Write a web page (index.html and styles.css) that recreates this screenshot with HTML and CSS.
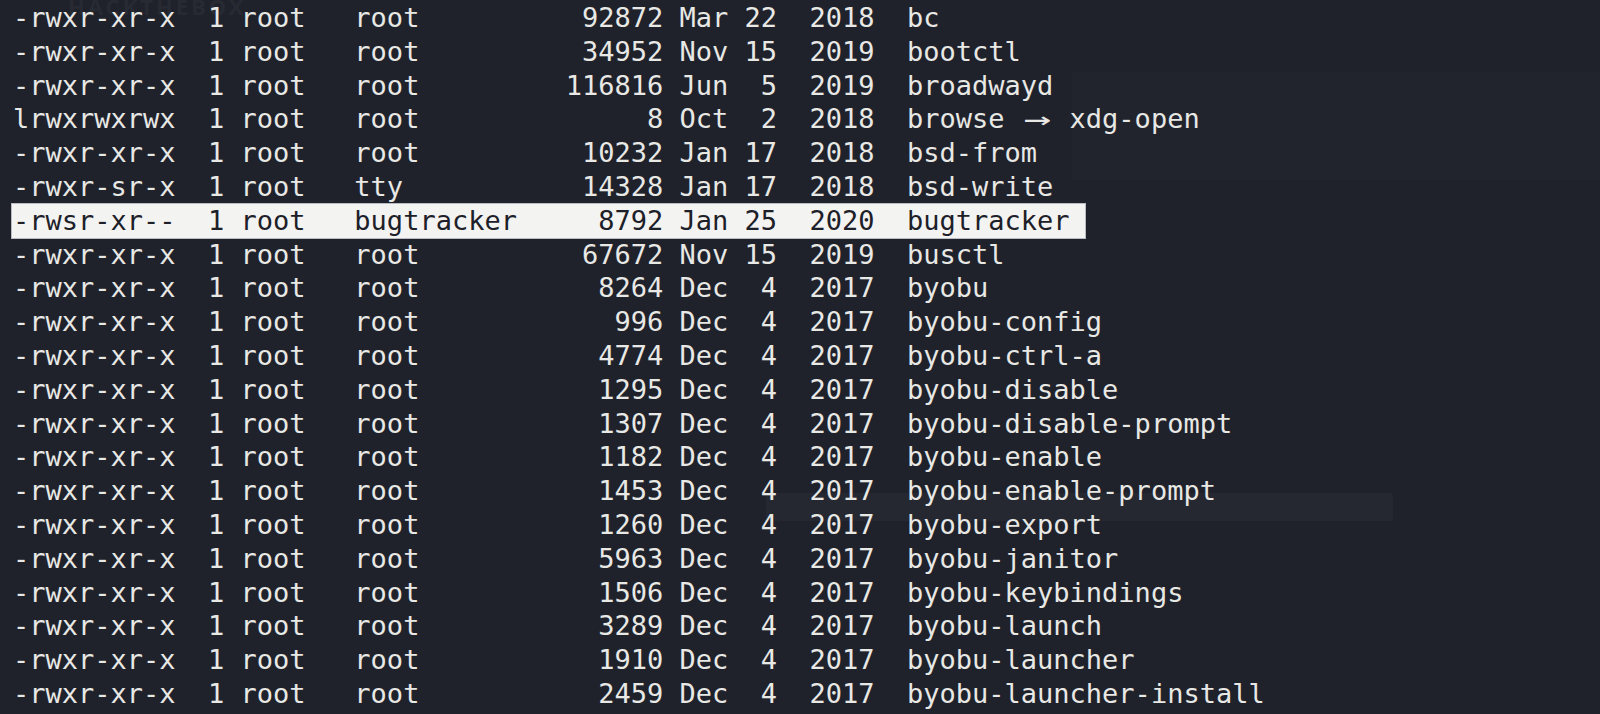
FILE: index.html
```html
<!DOCTYPE html>
<html lang="en">
<head>
<meta charset="utf-8">
<title>ls -l /usr/bin</title>
<link rel="stylesheet" href="styles.css">
</head>
<body>
<div class="screen">
  <div class="ghost ghost-logo">HACKTHEBOX</div>
  <div class="ghost ghost-panel"></div>
  <div class="ghost ghost-bar"></div>
  <div class="term">
<div class="ln">-rwxr-xr-x  1 root   root          92872 Mar 22  2018  bc</div>
<div class="ln">-rwxr-xr-x  1 root   root          34952 Nov 15  2019  bootctl</div>
<div class="ln">-rwxr-xr-x  1 root   root         116816 Jun  5  2019  broadwayd</div>
<div class="ln">lrwxrwxrwx  1 root   root              8 Oct  2  2018  browse <span class="arrow">→</span> xdg-open</div>
<div class="ln">-rwxr-xr-x  1 root   root          10232 Jan 17  2018  bsd-from</div>
<div class="ln">-rwxr-sr-x  1 root   tty           14328 Jan 17  2018  bsd-write</div>
<div class="ln sel">-rwsr-xr--  1 root   bugtracker     8792 Jan 25  2020  bugtracker</div>
<div class="ln">-rwxr-xr-x  1 root   root          67672 Nov 15  2019  busctl</div>
<div class="ln">-rwxr-xr-x  1 root   root           8264 Dec  4  2017  byobu</div>
<div class="ln">-rwxr-xr-x  1 root   root            996 Dec  4  2017  byobu-config</div>
<div class="ln">-rwxr-xr-x  1 root   root           4774 Dec  4  2017  byobu-ctrl-a</div>
<div class="ln">-rwxr-xr-x  1 root   root           1295 Dec  4  2017  byobu-disable</div>
<div class="ln">-rwxr-xr-x  1 root   root           1307 Dec  4  2017  byobu-disable-prompt</div>
<div class="ln">-rwxr-xr-x  1 root   root           1182 Dec  4  2017  byobu-enable</div>
<div class="ln">-rwxr-xr-x  1 root   root           1453 Dec  4  2017  byobu-enable-prompt</div>
<div class="ln">-rwxr-xr-x  1 root   root           1260 Dec  4  2017  byobu-export</div>
<div class="ln">-rwxr-xr-x  1 root   root           5963 Dec  4  2017  byobu-janitor</div>
<div class="ln">-rwxr-xr-x  1 root   root           1506 Dec  4  2017  byobu-keybindings</div>
<div class="ln">-rwxr-xr-x  1 root   root           3289 Dec  4  2017  byobu-launch</div>
<div class="ln">-rwxr-xr-x  1 root   root           1910 Dec  4  2017  byobu-launcher</div>
<div class="ln">-rwxr-xr-x  1 root   root           2459 Dec  4  2017  byobu-launcher-install</div>
  </div>
</div>
</body>
</html>
```
FILE: styles.css
```css
html, body {
  margin: 0;
  padding: 0;
  background: #1f222b;
  overflow: hidden;
}

.screen {
  position: relative;
  width: 1600px;
  height: 714px;
  overflow: hidden;
  background: #1f222b;
}

.term {
  position: relative;
  z-index: 2;
  padding: 1px 0 0 13px;
  font-family: "DejaVu Sans Mono", "Liberation Mono", monospace;
  font-size: 27px;
  line-height: 33.8px;
  color: #e8e8e5;
}

.ln {
  white-space: pre;
  height: 33.8px;
}

.sel {
  width: fit-content;
  margin-left: -1px;
  padding: 0 15px 0 1px;
  background: #f3f3f1;
  color: #1d2028;
  box-shadow: 0 0 0 1px #b9bcc2;
}

.arrow {
  display: inline-block;
  width: 2ch;
  text-align: center;
  transform: scaleX(1.7);
}

.ghost {
  position: absolute;
  z-index: 1;
}

.ghost-logo {
  left: 68px;
  top: -9px;
  font-family: "Noto Sans", sans-serif;
  font-weight: 700;
  font-size: 22px;
  letter-spacing: 3px;
  color: #272a33;
}

.ghost-panel {
  left: 1072px;
  top: 72px;
  width: 528px;
  height: 108px;
  background: #21242d;
}

.ghost-bar {
  left: 766px;
  top: 493px;
  width: 627px;
  height: 28px;
  border-radius: 3px;
  background: #252831;
}
```
